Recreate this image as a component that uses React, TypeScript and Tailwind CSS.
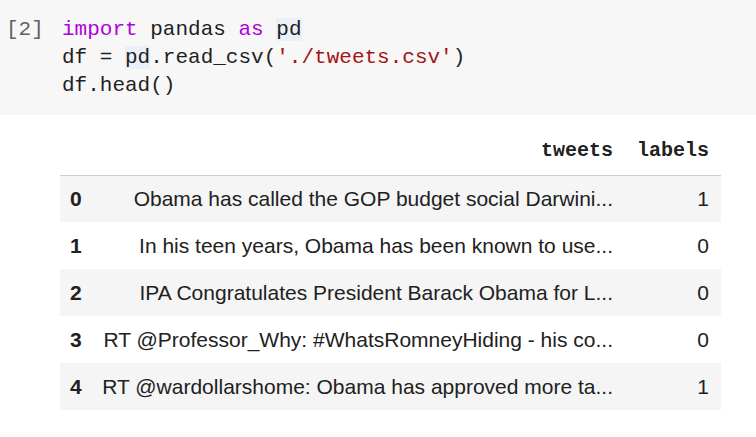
import React from 'react';

const rows = [
  { idx: 0, tweet: 'Obama has called the GOP budget social Darwini...', label: 1 },
  { idx: 1, tweet: 'In his teen years, Obama has been known to use...', label: 0 },
  { idx: 2, tweet: 'IPA Congratulates President Barack Obama for L...', label: 0 },
  { idx: 3, tweet: 'RT @Professor_Why: #WhatsRomneyHiding - his co...', label: 0 },
  { idx: 4, tweet: 'RT @wardollarshome: Obama has approved more ta...', label: 1 },
];

const mono = 'font-["Liberation_Mono","Courier_New",monospace]';

export default function App() {
  return (
    <div className="w-[756px] h-[437px] bg-white overflow-hidden font-['Liberation_Sans',Arial,sans-serif]">
      <div className={`h-[115px] bg-[#f7f7f7] flex pt-[16px] text-[21px] leading-[28px] text-[#1f1f1f] ${mono}`}>
        <div className="w-[62px] pl-[6px] text-[#616161] shrink-0">[2]</div>
        <div className="whitespace-pre">
          <div>
            <span className="text-[#af00db]">import</span> pandas{' '}
            <span className="text-[#af00db]">as</span>{' '}
            <span className="bg-[#eaf0f8]">pd</span>
          </div>
          <div>
            df = <span className="bg-[#eaf0f8]">pd</span>.read_csv(
            <span className="text-[#a31515]">'./tweets.csv'</span>)
          </div>
          <div>df.head()</div>
        </div>
      </div>

      <div className="pt-[13px] pl-[60px]">
        <table className="w-[661px] border-collapse text-[21px] text-[#212121]">
          <thead>
            <tr className="h-[47px] border-b border-[#cfcfcf]">
              <th className="w-[32px]"></th>
              <th className={`text-right font-bold pr-[12px] text-[20px] ${mono}`}>tweets</th>
              <th className={`w-[96px] text-right font-bold pr-[12px] text-[20px] ${mono}`}>labels</th>
            </tr>
          </thead>
          <tbody>
            {rows.map((r) => (
              <tr key={r.idx} className={`h-[47px] ${r.idx % 2 === 0 ? 'bg-[#f5f5f5]' : 'bg-white'}`}>
                <td className="pl-[10px] font-bold">{r.idx}</td>
                <td className="text-right pr-[12px] whitespace-nowrap">{r.tweet}</td>
                <td className="text-right pr-[12px]">{r.label}</td>
              </tr>
            ))}
          </tbody>
        </table>
      </div>
    </div>
  );
}
